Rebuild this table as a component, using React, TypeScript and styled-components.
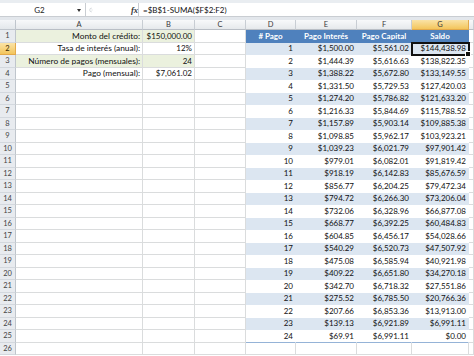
import React from "react";
import styled, { createGlobalStyle, css } from "styled-components";

const Global = createGlobalStyle`
  html, body { margin: 0; padding: 0; background: #ffffff; overflow: hidden; }
  body { font-family: Lato, "Liberation Sans", sans-serif; }
`;

const Page = styled.div`
  width: 474px;
  height: 356px;
  overflow: hidden;
  background: #ffffff;
  display: flex;
  flex-direction: column;
`;

const FormulaBar = styled.div`
  height: 17px;
  box-sizing: border-box;
  padding-top: 3px;
  background: #e9edf1;
  display: flex;
  align-items: stretch;
  border-bottom: 1px solid #c9cdd2;
`;

const NameBox = styled.div`
  width: 86px;
  box-sizing: border-box;
  background: #ffffff;
  border-right: 1px solid #c9cdd2;
  display: flex;
  align-items: center;
  position: relative;
  font-size: 8px;
  color: #222;
  padding-top: 1px;
`;

const NameText = styled.span`
  flex: 1;
  text-align: center;
  padding-left: 2px;
`;

const Caret = styled.span`
  width: 0;
  height: 0;
  border-left: 2.5px solid transparent;
  border-right: 2.5px solid transparent;
  border-top: 3px solid #333;
  margin-right: 4px;
`;

const Middle = styled.div`
  width: 52px;
  display: flex;
  align-items: center;
  background: #ffffff;
  border-right: 1px solid #c9cdd2;
`;

const Fx = styled.span`
  font-family: "Liberation Serif", serif;
  font-style: italic;
  font-weight: bold;
  font-size: 8.5px;
  color: #333;
  margin-left: 37px;
`;

const Formula = styled.div`
  flex: 1;
  background: #ffffff;
  display: flex;
  align-items: center;
  padding-left: 4px;
  padding-top: 1px;
  font-size: 8px;
  color: #111;
`;

const Strip = styled.div`
  height: 3px;
  background: #e3e7ec;
`;

const Grid = styled.div`
  display: grid;
  grid-template-columns: 16px 127px 52px 51px 50px 61px 55px 57px 1fr;
  grid-template-rows: 10px repeat(26, 12.5px);
`;

const headerBase = css`
  box-sizing: border-box;
  display: flex;
  align-items: center;
  justify-content: center;
  font-size: 7.5px;
  color: #3a3a3a;
`;

const Corner = styled.div`
  ${headerBase};
  background: linear-gradient(#f4f6f8, #e3e7eb);
  border-right: 1px solid #bfc5cc;
  border-bottom: 1px solid #bfc5cc;
`;

const ColHead = styled.div<{ $active?: boolean }>`
  ${headerBase};
  background: ${(p) => (p.$active ? "linear-gradient(#fae3a6, #f3c55c)" : "linear-gradient(#f8f9fa, #e6e9ec)")};
  border-right: 1px solid ${(p) => (p.$active ? "#e3a94a" : "#c8cdd3")};
  border-bottom: 1px solid ${(p) => (p.$active ? "#e3a94a" : "#b9bec5")};
`;

const RowHead = styled.div<{ $active?: boolean }>`
  ${headerBase};
  font-size: 7.5px;
  background: ${(p) => (p.$active ? "linear-gradient(#fae3a6, #f3c55c)" : "#e8ebef")};
  border-right: 1px solid ${(p) => (p.$active ? "#e3a94a" : "#bfc5cc")};
  border-bottom: 1px solid ${(p) => (p.$active ? "#e3a94a" : "#d3d8de")};
  color: ${(p) => (p.$active ? "#3a2a00" : "#444")};
`;

type CellProps = {
  $align?: "left" | "right" | "center";
  $fill?: string;
  $bold?: boolean;
  $color?: string;
  $selected?: boolean;
  $noGrid?: boolean;
  $bottom?: string;
  $size?: number;
};

const Cell = styled.div<CellProps>`
  box-sizing: border-box;
  position: relative;
  display: flex;
  align-items: flex-end;
  justify-content: ${(p) =>
    p.$align === "right" ? "flex-end" : p.$align === "center" ? "center" : "flex-start"};
  padding: 0 2px 1px 2px;
  font-size: ${(p) => p.$size || 8}px;
  line-height: 10px;
  white-space: nowrap;
  background: ${(p) => p.$fill || "#ffffff"};
  color: ${(p) => p.$color || "#111"};
  font-weight: ${(p) => (p.$bold ? 700 : 400)};
  border-right: 1px solid ${(p) => (p.$noGrid ? p.$fill || "#fff" : "#dadcdd")};
  border-bottom: 1px solid ${(p) => p.$bottom || (p.$noGrid ? p.$fill || "#fff" : "#dadcdd")};
  ${(p) =>
    p.$selected &&
    css`
      outline: 2px solid #111;
      outline-offset: -1px;
      z-index: 2;
    `}
`;

const FillHandle = styled.span`
  position: absolute;
  right: -3px;
  bottom: -3px;
  width: 4px;
  height: 4px;
  background: #111;
  border: 1px solid #fff;
`;

const rows: [string, string, string, string][] = [
  ["1", "$1,500.00", "$5,561.02", "$144,438.98"],
  ["2", "$1,444.39", "$5,616.63", "$138,822.35"],
  ["3", "$1,388.22", "$5,672.80", "$133,149.55"],
  ["4", "$1,331.50", "$5,729.53", "$127,420.03"],
  ["5", "$1,274.20", "$5,786.82", "$121,633.20"],
  ["6", "$1,216.33", "$5,844.69", "$115,788.52"],
  ["7", "$1,157.89", "$5,903.14", "$109,885.38"],
  ["8", "$1,098.85", "$5,962.17", "$103,923.21"],
  ["9", "$1,039.23", "$6,021.79", "$97,901.42"],
  ["10", "$979.01", "$6,082.01", "$91,819.42"],
  ["11", "$918.19", "$6,142.83", "$85,676.59"],
  ["12", "$856.77", "$6,204.25", "$79,472.34"],
  ["13", "$794.72", "$6,266.30", "$73,206.04"],
  ["14", "$732.06", "$6,328.96", "$66,877.08"],
  ["15", "$668.77", "$6,392.25", "$60,484.83"],
  ["16", "$604.85", "$6,456.17", "$54,028.66"],
  ["17", "$540.29", "$6,520.73", "$47,507.92"],
  ["18", "$475.08", "$6,585.94", "$40,921.98"],
  ["19", "$409.22", "$6,651.80", "$34,270.18"],
  ["20", "$342.70", "$6,718.32", "$27,551.86"],
  ["21", "$275.52", "$6,785.50", "$20,766.36"],
  ["22", "$207.66", "$6,853.36", "$13,913.00"],
  ["23", "$139.13", "$6,921.89", "$6,991.11"],
  ["24", "$69.91", "$6,991.11", "$0.00"],
];

const summary: [string, string][] = [
  ["Monto del crédito:", "$150,000.00"],
  ["Tasa de interés (anual):", "12%"],
  ["Número de pagos (mensuales):", "24"],
  ["Pago (mensual):", "$7,061.02"],
];

const GREEN = "#ebf1de";
const BLUE = "#4f81bd";
const BAND = "#dce6f1";

const Handle = () => (
  <svg width="14" height="12" viewBox="0 0 14 12" style={{ marginLeft: 2 }}>
    <path d="M9 1.5 A5 4.5 0 0 0 9 10.5" fill="none" stroke="#c4c9cf" strokeWidth="1.6" />
    <path d="M8 5 h3 M8 7 h3" stroke="#d0d4d9" strokeWidth="0.8" />
  </svg>
);

export default function App() {
  const cols = ["A", "B", "C", "D", "E", "F", "G", ""];
  const body: React.ReactNode[] = [];

  for (let r = 1; r <= 26; r++) {
    body.push(
      <RowHead key={`rh${r}`} $active={r === 2}>
        {r}
      </RowHead>
    );
    const s = summary[r - 1];
    const sFill = s ? (r % 2 === 1 ? GREEN : "#ffffff") : undefined;
    body.push(
      <Cell key={`a${r}`} $align="right" $fill={sFill} $size={8.4}>
        {s ? s[0] : ""}
      </Cell>
    );
    body.push(
      <Cell key={`b${r}`} $align="right" $fill={sFill}>
        {s ? s[1] : ""}
      </Cell>
    );
    body.push(<Cell key={`c${r}`} />);
    if (r === 1) {
      ["# Pago", "Pago Interés", "Pago Capital", "Saldo"].forEach((h, i) =>
        body.push(
          <Cell key={`h${i}`} $align="center" $fill={BLUE} $bold $color="#ffffff" $noGrid>
            {h}
          </Cell>
        )
      );
    } else if (r >= 2 && r <= 25) {
      const d = rows[r - 2];
      const fill = (r - 1) % 2 === 1 ? BAND : "#ffffff";
      const bottom = r === 25 ? "#95b3d7" : undefined;
      d.forEach((v, i) =>
        body.push(
          <Cell
            key={`d${r}-${i}`}
            $align="right"
            $fill={fill}
            $noGrid
            $bottom={bottom}
            $selected={r === 2 && i === 3}
          >
            {v}
            {r === 2 && i === 3 && <FillHandle />}
          </Cell>
        )
      );
    } else {
      for (let i = 0; i < 4; i++) body.push(<Cell key={`e${r}-${i}`} />);
    }
    body.push(<Cell key={`x${r}`} />);
  }

  return (
    <Page>
      <Global />
      <FormulaBar>
        <NameBox>
          <NameText>G2</NameText>
          <Caret />
        </NameBox>
        <Middle>
          <Handle />
          <Fx>fx</Fx>
        </Middle>
        <Formula>=$B$1-SUMA($F$2:F2)</Formula>
      </FormulaBar>
      <Strip />
      <Grid>
        <Corner />
        {cols.map((c) => (
          <ColHead key={`col${c}`} $active={c === "G"}>
            {c}
          </ColHead>
        ))}
        {body}
      </Grid>
    </Page>
  );
}
